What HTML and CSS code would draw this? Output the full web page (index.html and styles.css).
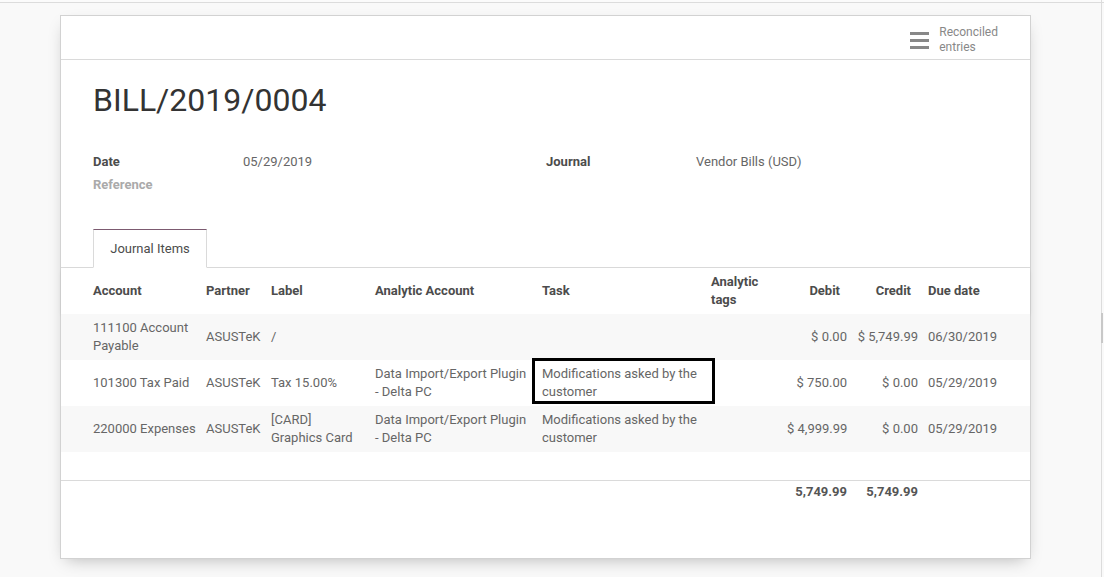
FILE: index.html
```html
<!DOCTYPE html>
<html lang="en">
<head>
<meta charset="utf-8">
<title>BILL/2019/0004</title>
<link rel="stylesheet" href="styles.css">
</head>
<body>
<div class="topbar"></div>
<div class="edge"><div class="thumb"></div></div>
<div class="sheet">
  <div class="sheet-head">
    <div class="smart-btn">
      <svg class="bars" width="19" height="17" viewBox="0 0 19 17"><rect x="0" y="0" width="19" height="3" fill="#888"/><rect x="0" y="7" width="19" height="3" fill="#888"/><rect x="0" y="14" width="19" height="3" fill="#888"/></svg>
      <span class="smart-text">Reconciled<br>entries</span>
    </div>
  </div>
  <div class="body">
    <h1 class="title">BILL/2019/0004</h1>
    <div class="group">
      <div class="lbl">Date</div><div class="val">05/29/2019</div>
      <div class="lbl">Journal</div><div class="val">Vendor Bills (USD)</div>
      <div class="lbl muted">Reference</div><div class="val"></div>
      <div></div><div></div>
    </div>
  </div>
  <div class="tabs">
    <div class="tab">Journal Items</div>
  </div>
  <table class="lines">
    <colgroup>
      <col class="c1"><col class="c2"><col class="c3"><col class="c4"><col class="c5"><col class="c6"><col class="c7"><col class="c8"><col class="c9">
    </colgroup>
    <thead>
      <tr>
        <th class="first">Account</th>
        <th>Partner</th>
        <th>Label</th>
        <th>Analytic Account</th>
        <th>Task</th>
        <th>Analytic tags</th>
        <th class="num">Debit</th>
        <th class="num">Credit</th>
        <th>Due date</th>
      </tr>
    </thead>
    <tbody>
      <tr class="odd">
        <td class="first">111100 Account Payable</td>
        <td>ASUSTeK</td>
        <td>/</td>
        <td></td>
        <td></td>
        <td></td>
        <td class="num">$ 0.00</td>
        <td class="num">$ 5,749.99</td>
        <td>06/30/2019</td>
      </tr>
      <tr>
        <td class="first">101300 Tax Paid</td>
        <td>ASUSTeK</td>
        <td>Tax 15.00%</td>
        <td>Data Import/Export Plugin - Delta PC</td>
        <td class="focus">Modifications asked by the customer</td>
        <td></td>
        <td class="num">$ 750.00</td>
        <td class="num">$ 0.00</td>
        <td>05/29/2019</td>
      </tr>
      <tr class="odd">
        <td class="first">220000 Expenses</td>
        <td>ASUSTeK</td>
        <td>[CARD] Graphics Card</td>
        <td>Data Import/Export Plugin - Delta PC</td>
        <td>Modifications asked by the customer</td>
        <td></td>
        <td class="num">$ 4,999.99</td>
        <td class="num">$ 0.00</td>
        <td>05/29/2019</td>
      </tr>
      <tr class="empty"><td colspan="9"></td></tr>
    </tbody>
    <tfoot>
      <tr>
        <td class="first"></td><td></td><td></td><td></td><td></td><td></td>
        <td class="num total">5,749.99</td>
        <td class="num total">5,749.99</td>
        <td></td>
      </tr>
    </tfoot>
  </table>
</div>
</body>
</html>
```

FILE: styles.css
```css
html, body {
  margin: 0;
  padding: 0;
}
body {
  background: #f9f9f9;
  font-family: Roboto, "Liberation Sans", sans-serif;
  font-size: 13px;
  color: #666;
  height: 577px;
  overflow: hidden;
  position: relative;
}
.topbar {
  height: 2px;
  background: #fbfbfb;
  border-bottom: 1px solid #dcdcdc;
}
.edge {
  position: absolute;
  top: 0;
  right: 2px;
  width: 1px;
  height: 577px;
  background: #dcdcdc;
}
.thumb {
  position: absolute;
  top: 313px;
  left: 0;
  width: 2px;
  height: 30px;
  background: #c8c8c8;
}
.sheet {
  box-sizing: border-box;
  margin: 12px 0 0 60px;
  width: 971px;
  height: 544px;
  background: #fff;
  border: 1px solid #d2d2d2;
  box-shadow: 0 6px 16px -6px rgba(0, 0, 0, 0.28);
}
.sheet-head {
  box-sizing: border-box;
  height: 44px;
  border-bottom: 1px solid #dadada;
  display: flex;
  justify-content: flex-end;
  align-items: center;
  padding-right: 32px;
  padding-top: 4px;
}
.smart-btn {
  display: flex;
  align-items: center;
  gap: 10px;
}
.bars {
  display: block;
  margin-top: 1px;
}
.smart-text {
  font-size: 12px;
  line-height: 15px;
  color: #888;
}
.body {
  padding: 21px 32px 0 32px;
}
.title {
  margin: 0;
  font-size: 32px;
  font-weight: 400;
  line-height: 38px;
  color: #333;
  letter-spacing: 0;
}
.group {
  margin-top: 33px;
  display: grid;
  grid-template-columns: 150px 303px 150px 1fr;
  grid-auto-rows: 23px;
  line-height: 20px;
}
.lbl {
  font-weight: 700;
  color: #4c4c4c;
}
.lbl.muted {
  color: #aaa;
}
.val {
  color: #666;
}
.tabs {
  margin-top: 31px;
  padding-left: 32px;
  border-bottom: 1px solid #dadada;
  display: flex;
}
.tab {
  box-sizing: border-box;
  width: 114px;
  height: 39px;
  margin-bottom: -1px;
  background: #fff;
  border: 1px solid #dadada;
  border-top: 1px solid #7c5a70;
  border-bottom-color: #fff;
  line-height: 37px;
  text-align: center;
  color: #4c4c4c;
}
.lines {
  width: 969px;
  border-collapse: collapse;
  table-layout: fixed;
}
.c1 { width: 140px; }
.c2 { width: 65px; }
.c3 { width: 104px; }
.c4 { width: 167px; }
.c5 { width: 169px; }
.c6 { width: 76px; }
.c7 { width: 70px; }
.c8 { width: 71px; }
.c9 { width: 107px; }
.lines thead tr {
  height: 46px;
  box-shadow: 0 2px 4px -1px rgba(0, 0, 0, 0.1);
}
.lines th {
  text-align: left;
  font-weight: 700;
  color: #4c4c4c;
  padding: 3px 5px 4px 5px;
  line-height: 18px;
  vertical-align: middle;
}
.lines th.num {
  text-align: right;
  padding-right: 12px;
}
.lines td {
  padding: 5px 5px;
  line-height: 18px;
  vertical-align: middle;
  color: #666;
}
.lines .first {
  padding-left: 32px;
}
.lines td.num {
  text-align: right;
  white-space: nowrap;
}
.lines tbody tr {
  height: 46px;
}
.lines tbody tr.odd {
  background: #f8f8f8;
}
.lines tbody tr.empty {
  height: 28px;
  background: #fff;
}
.lines tbody tr.empty td {
  padding: 0;
}
.focus {
  position: relative;
}
.focus::after {
  content: "";
  position: absolute;
  top: -2px;
  left: -5px;
  right: -9px;
  bottom: 2px;
  border: 3px solid #000;
}
.lines tfoot tr {
  border-top: 1px solid #dadada;
  height: 23px;
}
.lines tfoot td {
  padding: 2px 5px;
}
.lines td.total {
  font-weight: 700;
  color: #555;
}
```
